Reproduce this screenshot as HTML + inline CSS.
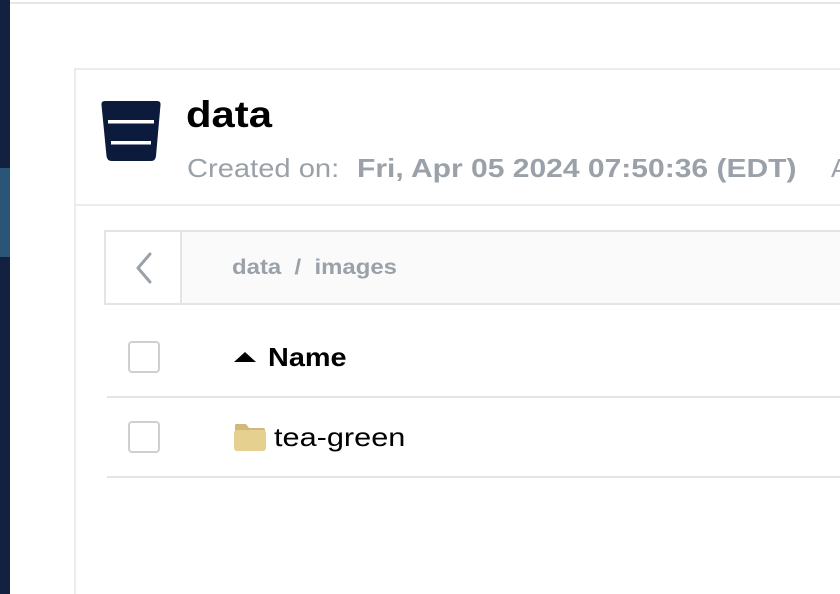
<!DOCTYPE html>
<html style="overflow:hidden;height:594px"><head><meta charset="utf-8"><style>
*{margin:0;padding:0;box-sizing:border-box}
body{width:840px;height:594px;overflow:hidden;background:#fff;font-family:"Liberation Sans",sans-serif;position:relative}
.abs{position:absolute;white-space:nowrap;transform-origin:0 0}
</style></head><body>
<div class="abs" style="left:0;top:0;width:10px;height:594px;background:#12213f"></div>
<div class="abs" style="left:0;top:168px;width:10px;height:89px;background:#2a5577"></div>
<div class="abs" style="left:10px;top:2px;width:830px;height:2px;background:#e6e6e6"></div>
<div class="abs" style="left:74px;top:68px;width:766px;height:526px;border-left:2px solid #ececec;border-top:2px solid #ececec"></div>
<div class="abs" style="left:76px;top:204px;width:764px;height:2px;background:#ececec"></div>
<svg class="abs" style="left:101px;top:101px" width="60" height="60" viewBox="0 0 60 60">
<path d="M4 0 H56 Q60 0 59.5 4 L55 55 Q54.5 60 50 60 H11 Q6 60 5.5 55 L0.5 4 Q0 0 4 0Z" fill="#0c1b3c"/>
<rect x="7" y="19" width="46" height="3.5" fill="#fff"/>
<rect x="10" y="40" width="40" height="3.5" fill="#fff"/>
</svg>
<div class="abs" style="left:186px;top:94px;font-size:37px;font-weight:bold;color:#000;transform:scaleX(1.13)">data</div>
<div class="abs" style="left:187px;top:153px;font-size:26px;color:#9aa1a9;transform:scaleX(1.12)">Created on:</div>
<div class="abs" style="left:357px;top:153px;font-size:26px;font-weight:bold;color:#9aa1a9;transform:scaleX(1.155)">Fri, Apr 05 2024 07:50:36 (EDT)</div>
<div class="abs" style="left:831px;top:153px;font-size:26px;color:#9aa1a9">A</div>
<div class="abs" style="left:104px;top:230px;width:736px;height:75px;border:2px solid #e4e4e4;border-right:none;background:#fafafa"></div>
<div class="abs" style="left:180px;top:232px;width:2px;height:71px;background:#e4e4e4"></div>
<div class="abs" style="left:106px;top:232px;width:74px;height:71px;background:#fff"></div>
<svg class="abs" style="left:132px;top:251px" width="22" height="34" viewBox="0 0 22 34"><path d="M18 3 L6 17 L18 31" stroke="#9aa1a9" stroke-width="3" fill="none" stroke-linecap="round" stroke-linejoin="round"/></svg>
<div class="abs" style="left:232px;top:256px;font-size:21px;font-weight:bold;color:#9aa1a9;transform:scaleX(1.14)">data&nbsp; /&nbsp; images</div>
<div class="abs" style="left:128px;top:341px;width:32px;height:32px;border:2px solid #cfcfcf;border-radius:4px"></div>
<svg class="abs" style="left:234px;top:351px" width="22" height="12"><path d="M0 11 L11 1 L22 11Z" fill="#000"/></svg>
<div class="abs" style="left:268px;top:342px;font-size:26px;font-weight:bold;color:#000;transform:scaleX(1.11)">Name</div>
<div class="abs" style="left:107px;top:396px;width:733px;height:2px;background:#e4e4e4"></div>
<div class="abs" style="left:128px;top:421px;width:32px;height:32px;border:2px solid #cfcfcf;border-radius:4px"></div>
<svg class="abs" style="left:234px;top:424px" width="32" height="27" viewBox="0 0 32 27"><path d="M2 0 H12 L15 4 H29 Q31 4 31 6 V9 H1 V2 Q1 0 2 0Z" fill="#d3b978"/><rect x="0" y="6" width="32" height="21" rx="3" fill="#e6d08f"/></svg>
<div class="abs" style="left:274px;top:422px;font-size:26px;color:#000;transform:scaleX(1.18)">tea-green</div>
<div class="abs" style="left:107px;top:476px;width:733px;height:2px;background:#e4e4e4"></div>
</body></html>
